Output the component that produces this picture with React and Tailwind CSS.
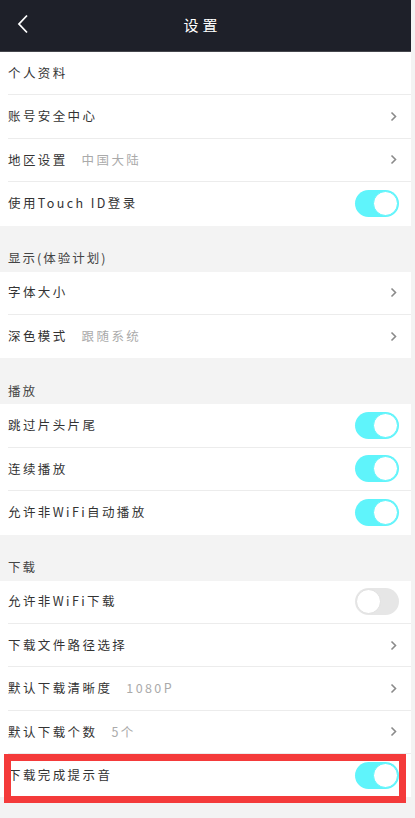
import React from 'react'

const font = { fontFamily: '"Noto Sans CJK SC", "Noto Sans", sans-serif' }

function Chevron() {
  return (
    <svg width="7" height="11" viewBox="0 0 7 11" className="mr-[14px]">
      <path d="M1.5 1.5 L5.5 5.5 L1.5 9.5" fill="none" stroke="#8a8a8a" strokeWidth="1.6" />
    </svg>
  )
}

function Toggle({ on }) {
  if (on) {
    return (
      <div className="mr-[12px] w-[44px] h-[27px] rounded-full bg-[#5ff4fb] flex items-center justify-end pr-[1px]">
        <div className="w-[25px] h-[25px] rounded-full bg-white border border-[#5ff4fb]" />
      </div>
    )
  }
  return (
    <div className="mr-[12px] w-[44px] h-[27px] rounded-full bg-[#e6e6e6] flex items-center pl-[1px]">
      <div className="w-[25px] h-[25px] rounded-full bg-white border border-[#e0e0e0]" />
    </div>
  )
}

function Row({ label, value, right, last, children }) {
  return (
    <div className="relative h-[43.4px] pl-[8px] bg-white">
      <div className={'h-full flex items-center justify-between ' + (last ? '' : 'border-b border-[#ececec]')}>
        <div className="flex items-center">
          <span className="text-[12.5px] tracking-[2.4px] text-[#333]">{label}</span>
          {value && <span className="ml-[14px] text-[12.5px] tracking-[2.4px] text-[#aaa]">{value}</span>}
        </div>
        {right === 'arrow' && <Chevron />}
        {right === 'on' && <Toggle on />}
        {right === 'off' && <Toggle on={false} />}
      </div>
      {children}
    </div>
  )
}

function SectionHead({ title }) {
  return (
    <div className="h-[46px] flex items-end pl-[8px] pb-[4px]">
      <span className="text-[12.5px] tracking-[2px] text-[#444]">{title}</span>
    </div>
  )
}

export default function App() {
  return (
    <div className="w-[415px] h-[818px] bg-[#f3f3f3] overflow-hidden" style={font}>
      <div className="w-[411px]">
        <div className="h-[52px] bg-[#1e2029] border-b border-[#45474d] flex items-center justify-center relative">
          <svg width="12" height="20" viewBox="0 0 12 20" className="absolute left-[17px] top-[14px]">
            <path d="M10 1.5 L2 10 L10 18.5" fill="none" stroke="#fff" strokeWidth="1.8" />
          </svg>
          <span className="text-[15px] tracking-[4px] text-white ml-[-6px]">设置</span>
        </div>

        <Row label="个人资料" />
        <Row label="账号安全中心" right="arrow" />
        <Row label="地区设置" value="中国大陆" right="arrow" />
        <Row label="使用Touch ID登录" right="on" last />

        <SectionHead title="显示(体验计划)" />
        <Row label="字体大小" right="arrow" />
        <Row label="深色模式" value="跟随系统" right="arrow" last />

        <SectionHead title="播放" />
        <Row label="跳过片头片尾" right="on" />
        <Row label="连续播放" right="on" />
        <Row label="允许非WiFi自动播放" right="on" last />

        <SectionHead title="下载" />
        <Row label="允许非WiFi下载" right="off" />
        <Row label="下载文件路径选择" right="arrow" />
        <Row label="默认下载清晰度" value="1080P" right="arrow" />
        <Row label="默认下载个数" value="5个" right="arrow" />
        <Row label="下载完成提示音" right="on" last>
          <div className="absolute left-[4px] top-0 w-[402px] h-[49px] border-[7px] border-[#f43a3a]" />
        </Row>
      </div>
    </div>
  )
}
